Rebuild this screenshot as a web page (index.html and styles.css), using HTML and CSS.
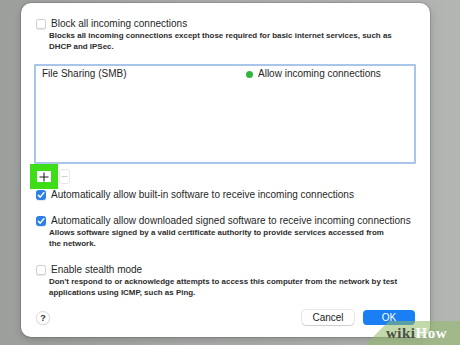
FILE: index.html
```html
<!doctype html>
<html>
<head>
<meta charset="utf-8">
<title>Firewall Options</title>
	<link rel="stylesheet" href="styles.css">
</head>

<body>
	<div class="dialog">
		<label class="option">
			<span class="check"></span>
			<span>Block all incoming connections</span>
		</label>
		<p class="desc">Blocks all incoming connections except those required for basic internet services, such as<br>DHCP and IPSec.</p>

		<div class="app-list">
			<div class="app-row">
				<span>File Sharing (SMB)</span>
				<span class="status"><i class="dot"></i>Allow incoming connections</span>
			</div>
		</div>
		<div class="list-tools">
			<button class="tool add">
				<svg width="10" height="10" viewBox="0 0 10 10"><path d="M5 0.5v9M0.5 5h9" stroke="#222" stroke-width="1.1" fill="none"/></svg>
			</button>
			<button class="tool remove">
				<svg width="7" height="7" viewBox="0 0 7 7"><path d="M0.5 3.5h6" stroke="#d0d0d0" stroke-width="1" fill="none"/></svg>
			</button>
		</div>

		<label class="option">
			<span class="check on"></span>
			<span>Automatically allow built-in software to receive incoming connections</span>
		</label>
		<label class="option gap">
			<span class="check on"></span>
			<span>Automatically allow downloaded signed software to receive incoming connections</span>
		</label>
		<p class="desc">Allows software signed by a valid certificate authority to provide services accessed from<br>the network.</p>

		<label class="option gap-lg">
			<span class="check"></span>
			<span>Enable stealth mode</span>
		</label>
		<p class="desc">Don't respond to or acknowledge attempts to access this computer from the network by test<br>applications using ICMP, such as Ping.</p>

		<div class="footer">
			<button class="help">?</button>
			<div class="actions">
				<button class="btn">Cancel</button>
				<button class="btn primary">OK</button>
			</div>
		</div>
	</div>

	<div class="watermark"><span class="wiki">wiki</span><span class="how">How</span></div>
</body>
</html>
```

FILE: styles.css
```css
*{box-sizing: border-box;}
body{
	margin: 0;
	width: 460px;
	height: 345px;
	overflow: hidden;
	background: linear-gradient(90deg,#9d9f9d 0%,#a9aba9 40%,#b3b5b3 100%);
	font-family: "Liberation Sans", Arial, sans-serif;
	color: #1f1f1f;
}
.dialog{
	margin: 3px 0 0 21px;
	width: 409px;
	height: 334px;
	background-color: #fff;
	border-radius: 10px;
	box-shadow: 0 0 0 1px rgba(0,0,0,0.12), 0 3px 8px rgba(0,0,0,0.18);
	padding: 14px 14px 0 13px;
	display: flex;
	flex-direction: column;
}
.option{
	display: flex;
	align-items: center;
	gap: 5px;
	height: 14px;
	font-size: 10px;
	line-height: 14px;
	padding-left: 2px;
	white-space: nowrap;
}
.option.gap{ margin-top: 12px; }
.option.gap-lg{ margin-top: 14px; }
.check{
	width: 10px;
	height: 10px;
	flex: none;
	border: 1px solid #cfcfcf;
	border-radius: 2.5px;
	background: #fff;
	box-shadow: 0 0.5px 1px rgba(0,0,0,0.1);
}
.check.on{
	border-color: #2a7fe8;
	background: #2a7fe8 url("data:image/svg+xml,%3Csvg xmlns='http://www.w3.org/2000/svg' viewBox='0 0 10 10'%3E%3Cpath d='M2.3 5.2l1.9 1.9 3.6-4.4' fill='none' stroke='%23fff' stroke-width='1.5' stroke-linecap='round' stroke-linejoin='round'/%3E%3C/svg%3E") center/10px 10px no-repeat;
}
.desc{
	margin: 0 0 0 15px;
	font-size: 7.95px;
	line-height: 10.5px;
	font-weight: bold;
	color: #2c2c2c;
	white-space: nowrap;
}
.app-list{
	margin-top: 12px;
	height: 100px;
	border: 2px solid #a8c5ea;
	border-radius: 1px;
	background: #fff;
}
.app-row{
	display: grid;
	grid-template-columns: 204px 1fr;
	padding: 1px 6px 0;
	font-size: 10px;
	line-height: 14px;
	white-space: nowrap;
}
.status{
	display: flex;
	align-items: center;
	gap: 5px;
}
.dot{
	width: 7px;
	height: 7px;
	border-radius: 50%;
	background: #31b540;
}
.list-tools{
	display: flex;
	align-items: flex-start;
	gap: 1px;
	height: 24px;
	margin-left: -4px;
}
.tool{
	padding: 0;
	background: #fff;
	display: flex;
	align-items: center;
	justify-content: center;
}
.add{
	width: 28px;
	height: 25px;
	border: 7px solid #3fdc18;
}
.remove{
	width: 11px;
	height: 15px;
	margin-top: 5px;
	border: 1px solid #e6e6e6;
	border-radius: 3px;
}
.footer{
	margin-top: 12px;
	display: flex;
	align-items: center;
	justify-content: space-between;
	padding-left: 2px;
	padding-right: 1px;
}
.help{
	width: 14px;
	height: 14px;
	padding: 0;
	border: 1px solid #dedede;
	border-radius: 50%;
	background: #fff;
	box-shadow: 0 0.5px 1px rgba(0,0,0,0.12);
	font-family: inherit;
	font-size: 9px;
	font-weight: bold;
	color: #333;
}
.actions{
	display: flex;
	gap: 9px;
}
.btn{
	width: 52px;
	height: 15px;
	padding: 0;
	border: none;
	border-radius: 4px;
	background: #fff;
	box-shadow: 0 0 0 0.5px rgba(0,0,0,0.18), 0 1px 1px rgba(0,0,0,0.12);
	font-family: inherit;
	font-size: 10px;
	color: #222;
}
.btn.primary{
	background: #1a7ff2;
	color: #fff;
	box-shadow: none;
}
.watermark{
	position: absolute;
	right: 0;
	bottom: 0;
	width: 95px;
	height: 24px;
	padding: 5px 0 0 21px;
	background: rgba(146,186,104,0.55);
	clip-path: polygon(0 100%, 24px 0, 100% 0, 100% 100%);
	font-family: "Liberation Serif", serif;
	font-weight: bold;
	font-size: 15px;
	line-height: 15px;
	letter-spacing: 0.5px;
}
.wiki{ color: #4a4d46; }
.how{ color: #fff; }
```
